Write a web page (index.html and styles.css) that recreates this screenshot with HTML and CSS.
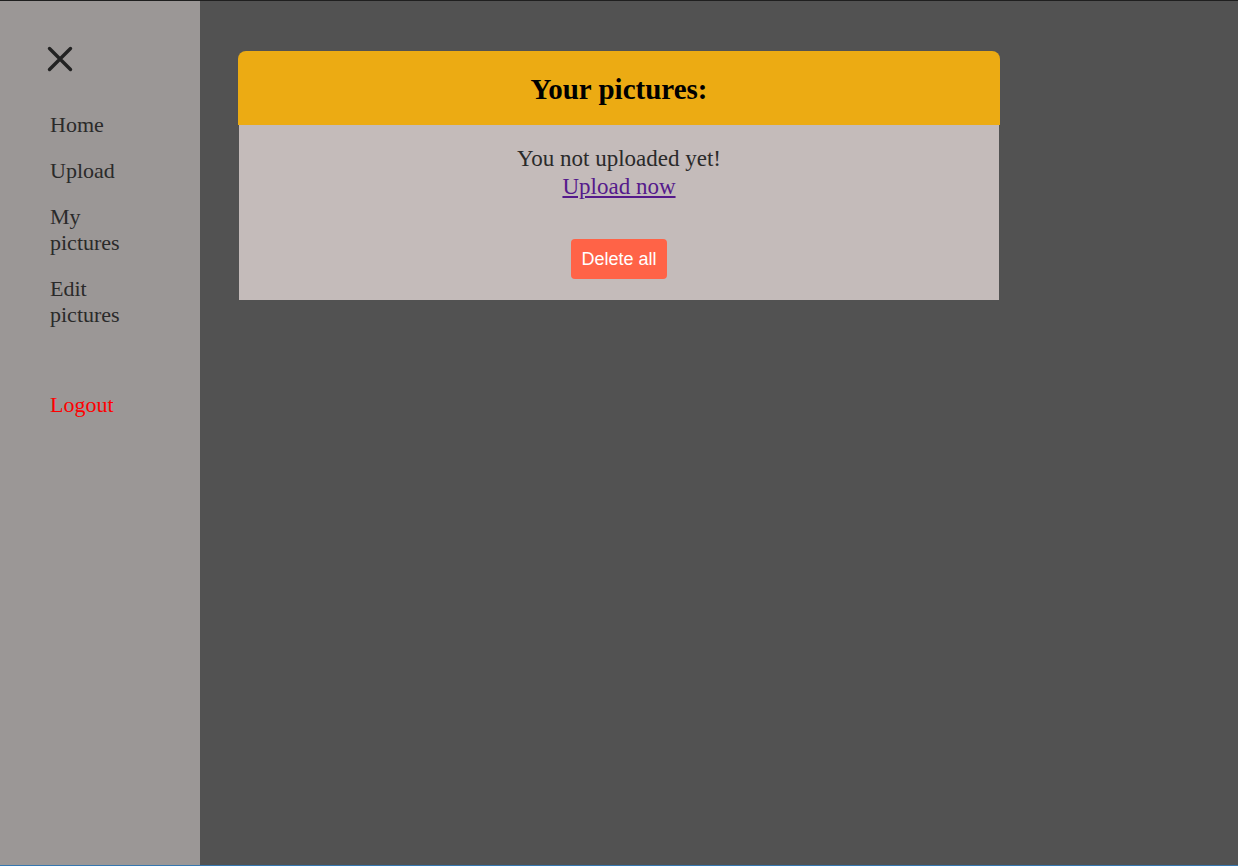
FILE: index.html
```html
<!DOCTYPE html>
<html lang="en">
<head>
<meta charset="utf-8">
<title>Your pictures</title>
<link rel="stylesheet" href="styles.css">
</head>
<body>
<div class="app">
  <aside class="sidebar">
    <button class="close" aria-label="Close menu">
      <svg width="26" height="26" viewBox="0 0 26 26"><path d="M2.5 2.5 L23.5 23.5 M23.5 2.5 L2.5 23.5" stroke="#222" stroke-width="3.4" stroke-linecap="round" fill="none"/></svg>
    </button>
    <nav class="nav">
      <a href="#" class="nav-link">Home</a>
      <a href="#" class="nav-link">Upload</a>
      <a href="#" class="nav-link">My pictures</a>
      <a href="#" class="nav-link">Edit pictures</a>
      <a href="#" class="nav-link logout">Logout</a>
    </nav>
  </aside>
  <main class="main">
    <section class="card">
      <header class="card-head"><h2 class="card-title">Your pictures:</h2></header>
      <div class="card-body">
        <p class="empty">You not uploaded yet!<br><a href="#" class="upload-link">Upload now</a></p>
        <button class="delete-btn">Delete all</button>
      </div>
    </section>
  </main>
</div>
</body>
</html>
```
FILE: styles.css
```css
html, body {
  margin: 0;
  padding: 0;
}
body {
  width: 1238px;
  height: 866px;
  box-sizing: border-box;
  border-top: 1px solid #1f1f1f;
  border-bottom: 1px solid #3577b0;
  background: #525252;
  font-family: "Liberation Serif", "Times New Roman", serif;
  overflow: hidden;
}
.app {
  display: flex;
  height: 100%;
}
.sidebar {
  width: 200px;
  flex: none;
  background: #9b9796;
  padding: 45px 0 0 47px;
  box-sizing: border-box;
}
.close {
  display: block;
  background: none;
  border: 0;
  padding: 0;
  width: 26px;
  height: 26px;
  cursor: pointer;
}
.close svg {
  display: block;
}
.nav {
  display: flex;
  flex-direction: column;
  gap: 20px;
  margin-top: 40px;
  padding-left: 3px;
  width: 80px;
}
.nav-link {
  font-size: 22px;
  line-height: 26px;
  color: #2a2a2a;
  text-decoration: none;
}
.logout {
  color: #ff0000;
  margin-top: 44px;
}
.main {
  flex: 1;
  padding: 50px 0 0 38px;
}
.card {
  width: 762px;
}
.card-head {
  background: #ecab13;
  border-radius: 8px 8px 0 0;
}
.card-title {
  margin: 0;
  text-align: center;
  font-size: 29px;
  line-height: 74px;
  padding-top: 1px;
  height: 74px;
  box-sizing: border-box;
  font-weight: bold;
  color: #000;
}
.card-body {
  margin: 0 1px;
  background: #c4bbba;
  padding: 19px 0 21px;
  display: flex;
  flex-direction: column;
  align-items: center;
}
.empty {
  margin: 0;
  padding-top: 1px;
  text-align: center;
  font-size: 23px;
  line-height: 28px;
  color: #2a2a2a;
}
.upload-link {
  color: #551a8b;
  text-decoration: underline;
}
.delete-btn {
  margin-top: 38px;
  height: 40px;
  padding: 0 10px;
  border: 0;
  border-radius: 4px;
  background: #ff6347;
  color: #fff;
  font-family: "Liberation Sans", Arial, sans-serif;
  font-size: 18px;
  cursor: pointer;
}
```
